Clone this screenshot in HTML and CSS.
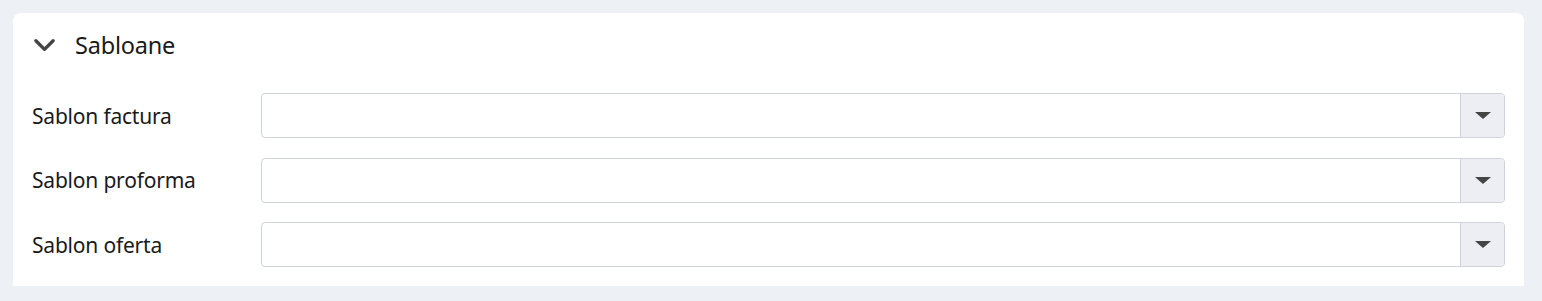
FILE: index.html
```html
<!DOCTYPE html>
<html lang="ro">

<head>
  <meta charset="UTF-8" />
  <meta name="viewport" content="width=device-width, initial-scale=1.0" />
  <title>Sabloane</title>
  <link rel="stylesheet" href="styles.css">
</head>

<body>
  <section class="panel">
    <div class="panel-header">
      <svg class="chevron" viewBox="0 0 24 24" fill="none" stroke="currentColor">
        <path stroke-width="3.5" stroke-linecap="round" stroke-linejoin="round" d="M3 7l9 9 9-9"></path>
      </svg>
      <h2 class="panel-title">Sabloane</h2>
    </div>

    <div class="panel-body">
      <div class="form-row">
        <label class="form-label">Sablon factura</label>
        <div class="select">
          <span class="select-value"></span>
          <span class="select-btn"><span class="caret"></span></span>
        </div>
      </div>
      <div class="form-row">
        <label class="form-label">Sablon proforma</label>
        <div class="select">
          <span class="select-value"></span>
          <span class="select-btn"><span class="caret"></span></span>
        </div>
      </div>
      <div class="form-row">
        <label class="form-label">Sablon oferta</label>
        <div class="select">
          <span class="select-value"></span>
          <span class="select-btn"><span class="caret"></span></span>
        </div>
      </div>
    </div>
  </section>
</body>

</html>
```

FILE: styles.css
```css
:root {
  --page-bg: #edf0f4;
  --panel-bg: #ffffff;
  --text: #1a1a1a;
  --border: #cfd4db;
  --btn-bg: #eceef3;
  --icon: #444444;
}

* {
  box-sizing: border-box;
  margin: 0;
  padding: 0;
}

body {
  font-family: "Noto Sans", "Open Sans", sans-serif;
  background-color: var(--page-bg);
  color: var(--text);
  padding: 13px 18px 0 13px;
}

.panel {
  background-color: var(--panel-bg);
  border-radius: 8px 8px 0 0;
  padding: 0 19px 19px 19px;
}

.panel-header {
  display: flex;
  align-items: center;
  height: 64px;
  padding-left: 1px;
}

.chevron {
  width: 23px;
  height: 23px;
  color: var(--icon);
  margin-right: 19px;
}

.panel-title {
  font-size: 23.5px;
  font-weight: 400;
  letter-spacing: -0.2px;
}

.panel-body {
  display: flex;
  flex-direction: column;
  gap: 19.5px;
  padding-top: 16px;
}

.form-row {
  display: flex;
  align-items: center;
}

.form-label {
  width: 229px;
  flex-shrink: 0;
  font-size: 21px;
  letter-spacing: -0.2px;
}

.select {
  flex: 1;
  display: flex;
  height: 45px;
  border: 1px solid var(--border);
  border-radius: 4px;
  overflow: hidden;
}

.select-value {
  flex: 1;
}

.select-btn {
  width: 44px;
  display: flex;
  align-items: center;
  justify-content: center;
  background-color: var(--btn-bg);
  border-left: 1px solid var(--border);
}

.caret {
  width: 0;
  height: 0;
  border-left: 8px solid transparent;
  border-right: 8px solid transparent;
  border-top: 7px solid var(--icon);
}
```
